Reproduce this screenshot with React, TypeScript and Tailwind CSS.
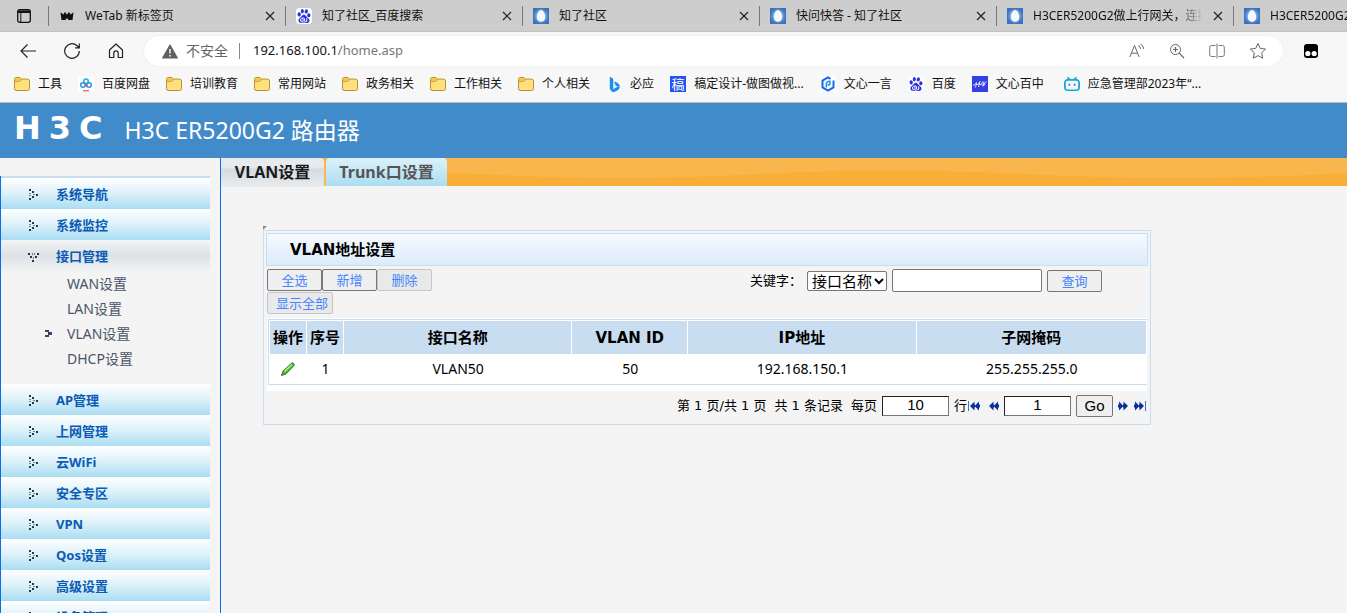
import type { ReactNode } from "react";
import { SiBaidu, SiBilibili } from "react-icons/si";
import { BsBing } from "react-icons/bs";

const Folder = () => (
  <svg width="16" height="16" viewBox="0 0 16 16">
    <path d="M.5 3.5a2 2 0 0 1 2-2h3.2l2 1.6h5.8a2 2 0 0 1 2 2v7.4a2 2 0 0 1-2 2h-11a2 2 0 0 1-2-2z" fill="#ffdf7e" stroke="#b8902a" />
    <path d="M1 5.2h4.6l2-2" fill="none" stroke="#b8902a" />
    <path d="M1 3.6C1 2.5 1.700 2 2.500 2h3L7 3.200 5.400 4.700H1z" fill="#f5c842" />
  </svg>
);

const Egg = () => (
  <svg width="16" height="16" viewBox="0 0 16 16">
    <defs>
      <radialGradient id="sky">
        <stop offset="0.3" stopColor="#a4c5ec" />
        <stop offset="1" stopColor="#3873bd" />
      </radialGradient>
    </defs>
    <rect width="16" height="16" fill="url(#sky)" />
    <path d="M8 2c2.400 0 4.200 4 4.200 7S10.400 13.800 8 13.800 3.800 12 3.800 9 5.600 2 8 2z" fill="#f5f9fd" />
  </svg>
);

const Paw = () => (
  <span className="flex size-4 items-center justify-center rounded-sm bg-white">
    <SiBaidu size={14} color="#2b32dc" />
  </span>
);

const Crown = () => (
  <svg width="14" height="10" viewBox="0 0 14 10">
    <path d="M.5 1.200 3.500 3.500 5 .8 7 3.700 9 .8l1.500 2.700 3-2.300-1 7.800H8.600L7 7 5.400 9H1.500z" fill="#111" />
  </svg>
);

const NetDisk = () => (
  <svg width="16" height="16" viewBox="0 0 16 16">
    <rect width="16" height="16" rx="3" fill="#fff" />
    <g fill="none" strokeWidth="1.500">
      <circle cx="8" cy="5.200" r="2.300" stroke="#23aef5" />
      <circle cx="5" cy="9" r="2.300" stroke="#1f9bf0" />
      <circle cx="11" cy="9" r="2.300" stroke="#1f9bf0" />
      <path d="M6.500 7.500 9.400 10.500" stroke="#f04864" />
    </g>
    <path d="M5 14.800h6" stroke="#f04864" strokeWidth="1.200" />
  </svg>
);

const Gaoding = () => (
  <span className="flex size-4 items-center justify-center bg-[#2254f4] text-[13px] leading-4 text-white">稿</span>
);

const Yiyan = () => (
  <svg width="16" height="16" viewBox="0 0 16 16">
    <rect width="16" height="16" fill="#fff" />
    <path d="M10.500 2.800 8 1.500 2.500 4.600v6.700L8 14.500l5.500-3.200V4.600" fill="none" stroke="#1668e8" strokeWidth="2" />
    <path d="M6.300 11.500V8c0-1.800 1-2.800 3.700-2.800v2c0 1.200-.8 1.900-2.500 1.900" fill="none" stroke="#1697f0" strokeWidth="1.500" />
  </svg>
);

const Baizhong = () => (
  <svg width="16" height="16" viewBox="0 0 16 16">
    <rect width="16" height="16" fill="#3340e6" />
    <path d="M1 9.500l2-1 1.500-2-1 5M4 8.500h2l2-3-1.500 5.500M7 8.500h2.500l1-3M10 9.500l2-1.500 2.500-2.500M12 5.500l-1 5M13 8l-1.500 2" fill="none" stroke="#fff" strokeWidth=".8" />
  </svg>
);

const Close = () => (
  <svg width="10" height="10" viewBox="0 0 10 10">
    <path d="M1 1l8 8M9 1l-8 8" stroke="#222" strokeWidth="1.200" />
  </svg>
);

const tabs: { icon: ReactNode; title: string; long?: boolean }[] = [
  { icon: <Crown />, title: "WeTab 新标签页" },
  { icon: <Paw />, title: "知了社区_百度搜索" },
  { icon: <Egg />, title: "知了社区" },
  { icon: <Egg />, title: "快问快答 - 知了社区" },
  { icon: <Egg />, title: "H3CER5200G2做上行网关，连接", long: true },
  { icon: <Egg />, title: "H3CER5200G2做上行", long: true },
];

const bookmarks: { icon: ReactNode; title: string }[] = [
  { icon: <Folder />, title: "工具" },
  { icon: <NetDisk />, title: "百度网盘" },
  { icon: <Folder />, title: "培训教育" },
  { icon: <Folder />, title: "常用网站" },
  { icon: <Folder />, title: "政务相关" },
  { icon: <Folder />, title: "工作相关" },
  { icon: <Folder />, title: "个人相关" },
  { icon: <BsBing size={15} color="#1c8df0" />, title: "必应" },
  { icon: <Gaoding />, title: "稿定设计-做图做视..." },
  { icon: <Yiyan />, title: "文心一言" },
  { icon: <Paw />, title: "百度" },
  { icon: <Baizhong />, title: "文心百中" },
  { icon: <SiBilibili size={16} color="#12a5dc" />, title: "应急管理部2023年“..." },
];

function Browser() {
  return (
    <header className="shrink-0 border-b border-[#b9b9b9] bg-[#f7f7f7] text-xs text-[#111]">
      <div className="flex h-8 items-center overflow-hidden border-b border-[#c2c2c2] bg-[#cdcdcd]">
        <button aria-label="标签页操作" className="flex w-12 shrink-0 justify-center">
          <svg width="14" height="14" viewBox="0 0 14 14" fill="none" stroke="#111">
            <rect x=".7" y=".7" width="12.600" height="12.600" rx="2" strokeWidth="1.300" />
            <path d="M1 2.700h12" strokeWidth="2.600" />
            <path d="M3.800 4v9" />
          </svg>
        </button>
        {tabs.map((t, i) => (
          <div key={i} className="flex h-5 w-[237px] shrink-0 items-center gap-2.5 border-l border-[#777] px-2.5">
            <span className="flex w-4 shrink-0 justify-center">{t.icon}</span>
            <span
              className={
                "flex-1 overflow-hidden leading-5 whitespace-nowrap " +
                (t.long ? "mask-linear-to-r mask-r-from-85% mask-r-to-100%" : "")
              }
            >
              {t.title}
            </span>
            <button aria-label="关闭标签页"><Close /></button>
          </div>
        ))}
      </div>
      <div className="flex h-[38px] items-center">
        <nav className="flex w-36 shrink-0 items-center gap-7 pl-5">
          <button aria-label="后退">
            <svg width="16" height="16" viewBox="0 0 16 16" fill="none" stroke="#222" strokeWidth="1.200"><path d="M16 8H1M7.500 1.500 1 8l6.500 6.500" /></svg>
          </button>
          <button aria-label="刷新">
            <svg width="16" height="16" viewBox="0 0 16 16" fill="none" stroke="#222" strokeWidth="1.200"><path d="M15.300 8A7.300 7.300 0 1 1 12.800 2.500L15 4.500M15.300.5v4.300H11" /></svg>
          </button>
          <button aria-label="主页">
            <svg width="16" height="16" viewBox="0 0 16 16" fill="none" stroke="#222" strokeWidth="1.200"><path d="M1.500 7 8 1l6.500 6v7.500H10.200V10a2.200 2.200 0 0 0-4.400 0v4.500H1.500z" strokeLinejoin="round" /></svg>
          </button>
        </nav>
        <div className="flex h-[30px] flex-1 items-center rounded-full bg-white pr-4 pl-[18px] text-[13px] shadow-[0_0_2px_#e4e4e4]">
          <svg width="16" height="15" viewBox="0 0 16 15">
            <path d="M8 1 15.300 14H.7z" fill="#606060" stroke="#606060" strokeWidth="1.200" strokeLinejoin="round" />
            <path d="M8 5v4.500M8 11v1.500" stroke="#fff" strokeWidth="1.400" />
          </svg>
          <span className="ml-2 text-[14px] text-[#666]">不安全</span>
          <span className="ml-[11px] h-4 w-px bg-[#888]" />
          <span className="ml-[13px] flex-1">192.168.100.1<span className="text-[#777]">/home.asp</span></span>
          <div className="flex items-center gap-6">
            <button aria-label="朗读">
              <svg width="16" height="16" viewBox="0 0 16 16" fill="none" stroke="#666"><path d="M.8 14 5.500 2.500 10.200 14M2.400 10.200h6.200M9.500 2.200a5 5 0 0 1 2 3.800M11.500.8A8 8 0 0 1 14.800 6" /></svg>
            </button>
            <button aria-label="放大">
              <svg width="16" height="16" viewBox="0 0 16 16" fill="none" stroke="#666"><circle cx="6.500" cy="6.500" r="5" /><path d="M10.200 10.200 15 15M4 6.500h5M6.500 4v5" strokeWidth="1.200" /></svg>
            </button>
            <button aria-label="分屏">
              <svg width="16" height="16" viewBox="0 0 16 16" fill="none" stroke="#777"><path d="M6.500 2.500h-4a1.800 1.800 0 0 0-1.800 1.800v7.400a1.800 1.800 0 0 0 1.800 1.800h4M9.500 2.500h4a1.800 1.800 0 0 1 1.800 1.800v7.400a1.800 1.800 0 0 1-1.800 1.800h-4M8 .5v15" /></svg>
            </button>
            <button aria-label="收藏">
              <svg width="18" height="18" viewBox="0 0 18 18" fill="none" stroke="#666"><path d="m9 1.500 2.300 4.900 5.300.7-3.900 3.700 1 5.400L9 13.600l-4.700 2.600 1-5.400L1.400 7.100l5.300-.7z" strokeLinejoin="round" /></svg>
            </button>
          </div>
        </div>
        <button aria-label="扩展" className="ml-5 w-11 shrink-0">
          <svg width="16" height="16" viewBox="0 0 16 16">
            <rect x="1" y="1" width="14" height="14" rx="3" fill="#000" />
            <circle cx="4.800" cy="10.500" r="2.600" fill="#fff" /><circle cx="11.200" cy="10.500" r="2.600" fill="#fff" />
          </svg>
        </button>
      </div>
      <nav className="flex h-8 items-center gap-4 pb-1 pl-3.5">
        {bookmarks.map((b) => (
          <a key={b.title} href="#" className="flex items-center gap-2 whitespace-nowrap last:ml-1">
            <span className="flex w-4 justify-center">{b.icon}</span>
            {b.title}
          </a>
        ))}
      </nav>
    </header>
  );
}

const Dots = ({ down = false }: { down?: boolean }) => (
  <svg width="12" height="12" viewBox="0 0 12 12" fill="#2c3450" className={down ? "rotate-90" : ""}>
    <rect x="2" y="0" width="2" height="2" /><rect x="5" y="2" width="2" height="2" />
    <rect x="2" y="4" width="2" height="1" opacity=".6" /><rect x="6" y="5" width="2" height="1" opacity=".6" />
    <rect x="9" y="5" width="2" height="2" /><rect x="5" y="7" width="2" height="2" />
    <rect x="2" y="6" width="2" height="1" opacity=".6" /><rect x="2" y="9" width="2" height="2" />
  </svg>
);

function MenuItem({ label, open = false }: { label: string; open?: boolean }) {
  return (
    <a
      href="#"
      className={
        "flex h-[31px] items-center gap-[17px] pt-0.5 pl-[26px] text-[13px] font-bold text-[#0a5bb5] " +
        (open
          ? "bg-linear-to-b from-[#f3f5f6] via-[#dce1e6] to-[#f1f2f3]"
          : "bg-linear-to-b from-white via-[#dcf1f9] to-[#a9ddf2]")
      }
    >
      <Dots down={open} />
      {label}
    </a>
  );
}

function Sidebar() {
  return (
    <aside className="w-[221px] shrink-0 border-r border-[#0a6cf0] pt-[18px]">
      <nav className="h-full border-l border-[#0a6cf0] pr-2.5">
        <div className="h-0.5 bg-[#c9ddf0]" />
        <MenuItem label="系统导航" />
        <MenuItem label="系统监控" />
        <MenuItem label="接口管理" open />
        <ul className="pb-[13px] pl-[42px] text-[14px] text-[#4a5568]">
          {["WAN设置", "LAN设置", "VLAN设置", "DHCP设置"].map((s) => (
            <li key={s} className="flex h-[25px] items-center">
              <span className="w-6">
                {s === "VLAN设置" && (
                  <svg width="10" height="8" viewBox="0 0 10 8" fill="#3b4560"><path d="M2 0h4v2H2zM5 2h4v3H5zM2 5h4v2H2z" /></svg>
                )}
              </span>
              <a href="#">{s}</a>
            </li>
          ))}
        </ul>
        {["AP管理", "上网管理", "云WiFi", "安全专区", "VPN", "Qos设置", "高级设置", "设备管理"].map((m) => (
          <MenuItem key={m} label={m} />
        ))}
      </nav>
    </aside>
  );
}

function ActionButton({ children, disabled = false, wide = false }: { children: ReactNode; disabled?: boolean; wide?: boolean }) {
  return (
    <button
      disabled={disabled}
      className={
        "h-[22px] rounded-[2px] border text-[13px] leading-5 text-[#4585ff] " +
        (wide ? "w-[66px] pl-1 " : "w-[55px] ") +
        (disabled ? "border-[#c6c6c6] bg-[#e9e9e9]" : "border-[#767676] bg-[#efefef]")
      }
    >
      {children}
    </button>
  );
}

const Jump = ({ label, back = false, end = false }: { label: string; back?: boolean; end?: boolean }) => (
  <button aria-label={label}>
    <svg width={end ? 12 : 11} height="10" viewBox={end ? "0 0 12 10" : "0 0 11 10"} fill="#0a3296" className={back ? "rotate-180" : ""}>
      <path d="M0 3.500h1V.5L5.500 5 1 9.500v-3H0zM5 3.500h.5V.5L10 5 5.500 9.500v-3H5z" />
      {end && <rect x="11" y="0" width="1" height="10" opacity=".7" />}
    </svg>
  </button>
);

const columns = ["操作", "序号", "接口名称", "VLAN ID", "IP地址", "子网掩码"];

function Panel() {
  return (
    <section className="mt-10 mr-[196px] ml-[42px]">
      <svg width="4" height="4" viewBox="0 0 4 4" className="block"><path d="M0 0h4L0 4z" fill="#888" /></svg>
      <div className="border border-[#c9ddf0] p-0.5">
        <h2 className="h-[33px] border border-[#c9ddf0] bg-linear-to-b from-[#f6faff] to-[#dceafa] pl-[23px] font-['DejaVu_Sans','Noto_Sans_CJK_SC',sans-serif] text-[15px] leading-[33px] font-bold">
          VLAN地址设置
        </h2>
        <div className="flex items-start justify-between pt-[3px] pr-[46px] pl-px">
          <div>
            <div className="flex">
              <ActionButton>全选</ActionButton>
              <ActionButton>新增</ActionButton>
              <ActionButton disabled>删除</ActionButton>
            </div>
            <div className="mt-px flex"><ActionButton disabled wide>显示全部</ActionButton></div>
          </div>
          <form className="flex items-center gap-[5px] text-[13px]" onSubmit={(e) => e.preventDefault()}>
            <label htmlFor="field">关键字：</label>
            <div className="relative flex">
              <select id="field" className="h-5 w-20 appearance-none rounded-[2px] border border-[#767676] bg-white pl-1 text-[15px] leading-[18px]">
                <option>接口名称</option>
              </select>
              <svg className="pointer-events-none absolute top-[7px] right-[3px]" width="10" height="7" viewBox="0 0 10 7" fill="none" stroke="#000" strokeWidth="2">
                <path d="m1 1 4 4 4-4" />
              </svg>
            </div>
            <input aria-label="关键字内容" className="h-[23px] w-[150px] rounded-[2px] border border-[#767676] bg-white px-1" />
            <ActionButton>查询</ActionButton>
          </form>
        </div>
        <div className="mt-1 mr-px ml-px bg-white pt-px pb-1.5 pl-px">
          <table className="w-full table-fixed border-separate border-spacing-0 border border-r-0 border-[#c9ddf0] text-center text-[14px]">
            <colgroup>
              <col className="w-[38px]" /><col className="w-[37px]" /><col className="w-[26%]" />
              <col className="w-[116px]" /><col className="w-[26%]" /><col />
            </colgroup>
            <thead>
              <tr className="font-['DejaVu_Sans','Noto_Sans_CJK_SC',sans-serif] text-[15px]">
                {columns.map((c) => (
                  <th key={c} className="h-[34px] border-t border-r border-white bg-[#c9ddf0] p-0 pt-px leading-5 font-bold whitespace-nowrap first:border-l">{c}</th>
                ))}
              </tr>
            </thead>
            <tbody>
              <tr>
                <td className="h-[30px] p-0">
                  <button aria-label="编辑" className="mx-auto flex w-4">
                    <svg width="16" height="16" viewBox="0 0 16 16">
                      <path d="M1.500 14.500 3 10.200 11.500 2.300c1.500-1 3.300.6 2.500 2.200L6 12.800z" fill="#4fc02b" stroke="#256b1a" />
                      <path d="M4.500 10.500 12 3.500" stroke="#b8f08f" strokeWidth="1.300" />
                      <path d="m1.500 14.500 1-3 2 1.800z" fill="#777" />
                    </svg>
                  </button>
                </td>
                <td className="p-0 pb-0.5">1</td>
                <td className="p-0 pb-0.5">VLAN50</td>
                <td className="p-0 pb-0.5">50</td>
                <td className="p-0 pb-0.5">192.168.150.1</td>
                <td className="p-0 pb-0.5">255.255.255.0</td>
              </tr>
            </tbody>
          </table>
        </div>
        <div className="flex h-[31px] items-center justify-end gap-[5px] pr-0.5 pb-0.5 font-['DejaVu_Sans','Noto_Sans_CJK_SC',sans-serif] text-[13px]">
          <label htmlFor="rows" className="flex gap-2"><span>第 1 页/共 1 页</span><span>共 1 条记录</span><span>每页</span></label>
          <input id="rows" defaultValue="10" className="h-5 w-[67px] border border-t-[#222] border-r-[#767676] border-b-[#767676] border-l-[#222] bg-white text-center font-['Liberation_Sans',sans-serif] text-[15px]" />
          <span className="mr-[3px] flex items-center gap-px">行<Jump label="首页" back end /></span>
          <Jump label="上一页" back />
          <input aria-label="页码" defaultValue="1" className="h-5 w-[67px] border border-t-[#222] border-r-[#767676] border-b-[#767676] border-l-[#222] bg-white text-center font-['Liberation_Sans',sans-serif] text-[15px]" />
          <button className="h-[22px] w-[37px] rounded-[2px] border border-[#767676] bg-[#efefef] font-['Liberation_Sans',sans-serif] text-[15px] leading-5">Go</button>
          <Jump label="下一页" />
          <Jump label="末页" end />
        </div>
      </div>
    </section>
  );
}

export default function App() {
  return (
    <div className="flex h-screen flex-col overflow-hidden bg-[#f4f4f4] font-['Noto_Sans','Noto_Sans_CJK_SC',sans-serif] text-black">
      <Browser />
      <div className="flex h-[55px] shrink-0 items-center gap-[22px] bg-[#428bca] pl-3.5 text-white">
        <div className="flex gap-2 pb-1.5 font-['DejaVu_Sans',sans-serif] text-[32px] leading-10 font-bold">
          <span>H</span><span>3</span><span>C</span>
        </div>
        <h1 className="text-[23px]">H3C ER5200G2 路由器</h1>
      </div>
      <div className="flex min-h-0 flex-1">
        <Sidebar />
        <main className="min-w-0 flex-1">
          <div className="flex h-7 bg-[#f8b64c] text-[16px] leading-5 font-bold">
            <a href="#" className="flex h-[29px] w-[103px] items-center justify-center rounded-tr bg-linear-to-b from-[#e8ebed] from-30% via-[#d6dbe0] via-40% to-[#e9ecee] pb-0.5 text-[#1a1a1a]">VLAN设置</a>
            <a href="#" className="ml-0.5 flex w-[121px] items-center justify-center rounded-t bg-linear-to-b from-[#dcf1f9] to-[#abddf1] pb-px text-[#555]">Trunk口设置</a>
            <svg className="h-7 min-w-0 flex-1" viewBox="0 0 900 28" preserveAspectRatio="none">
              <path d="M0 15C60 17 100 20 172 20 280 20 350 12 453 12.500 550 13 620 20 728 20 800 20 850 18 900 15V28H0z" fill="#f8ae37" />
            </svg>
          </div>
          <Panel />
        </main>
      </div>
    </div>
  );
}
